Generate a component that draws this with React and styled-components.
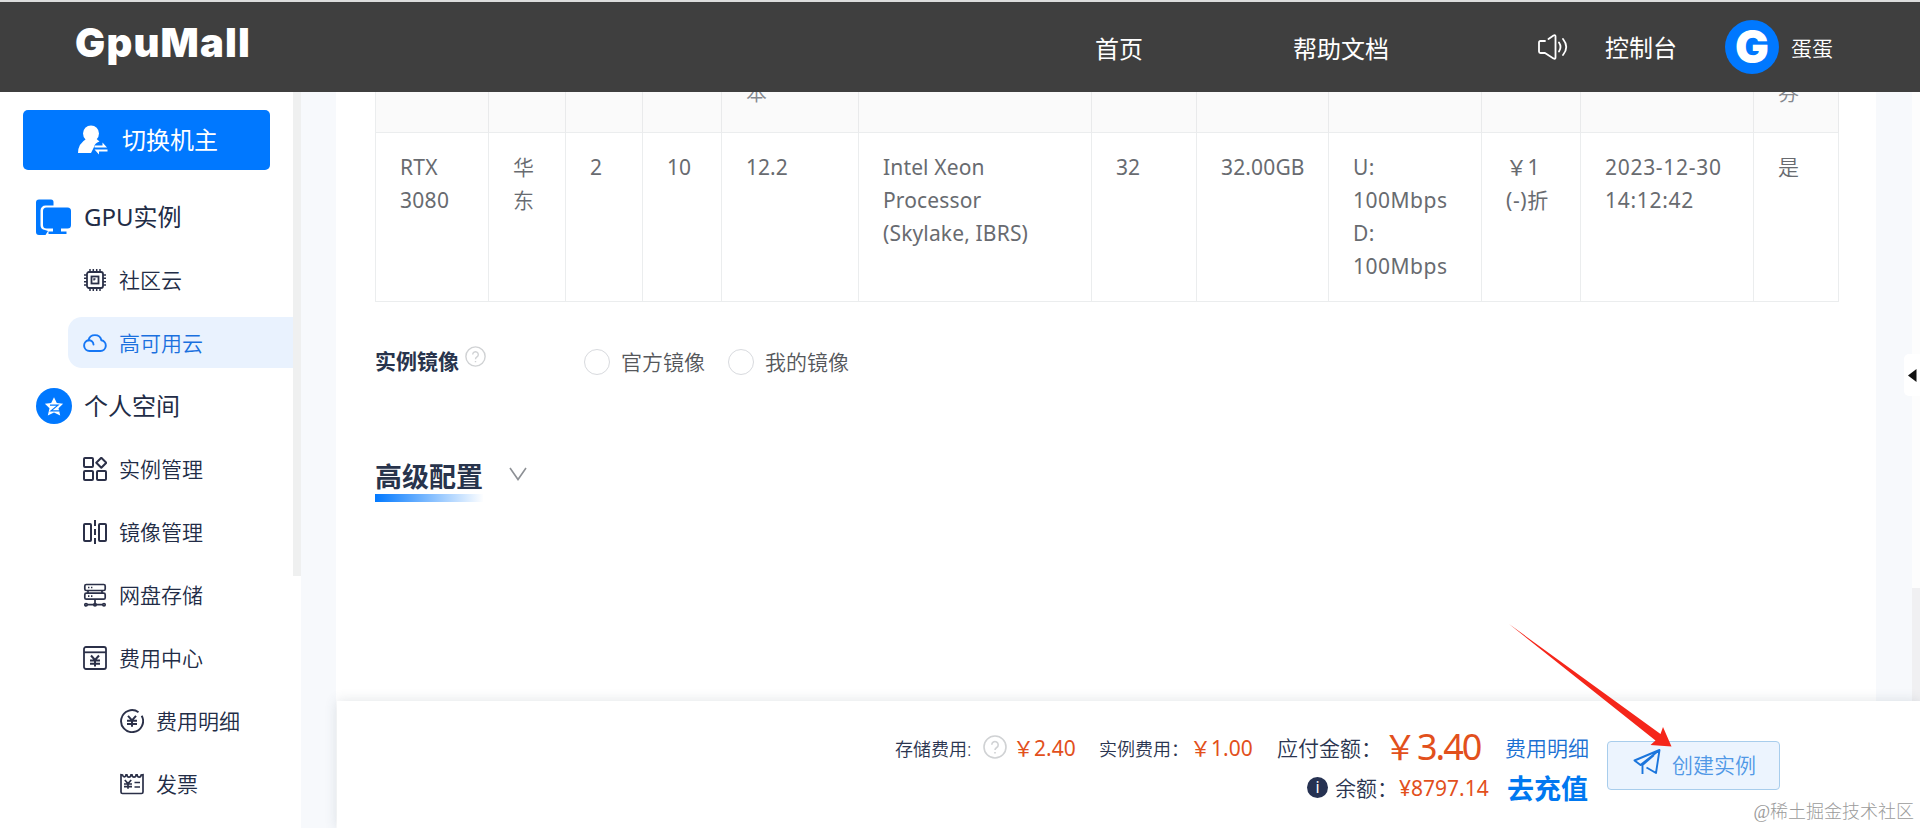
import React from 'react';
import styled, { createGlobalStyle } from 'styled-components';

const GlobalStyle = createGlobalStyle`
  * {
    box-sizing: border-box;
  }

  body {
    margin: 0;
    overflow: hidden;
    background: #dcdddd;
    font-family: "Noto Sans", "Noto Sans CJK SC", sans-serif;
    font-size: 21px;
    color: #2b3550;
  }
`;

const MENU = [
  { icon: 'gpu', text: 'GPU实例', level: 0 },
  { icon: 'chip', text: '社区云', level: 1 },
  { icon: 'cloud', text: '高可用云', level: 1, active: true },
  { icon: 'star', text: '个人空间', level: 0 },
  { icon: 'apps', text: '实例管理', level: 1 },
  { icon: 'mirror', text: '镜像管理', level: 1 },
  { icon: 'disk', text: '网盘存储', level: 1 },
  { icon: 'wallet', text: '费用中心', level: 1 },
  { icon: 'coin', text: '费用明细', level: 2 },
  { icon: 'invoice', text: '发票', level: 2 },
];

const HEAD = ['', '', '', '', '本', '', '', '', '', '', '', '券'];

const ROW = [
  { lines: ['RTX', '3080'], spacing: 0.3 },
  { lines: ['华', '东'], thin: true },
  { lines: ['2'] },
  { lines: ['10'] },
  { lines: ['12.2'] },
  { lines: ['Intel Xeon', 'Processor', '(Skylake, IBRS)'], spacing: 0.15 },
  { lines: ['32'] },
  { lines: ['32.00GB'], spacing: 0.15 },
  { lines: ['U:', '100Mbps', 'D:', '100Mbps'], spacing: 0.5 },
  { lines: ['￥1', '(-)折'], spacing: 0.6 },
  { lines: ['2023-12-30', '14:12:42'], spacing: 0.7 },
  { lines: ['是'], thin: true },
];

const Yuan = ({ x, y, s = 1, w = 2 }) => (
  <path
    d={`M${x - 4 * s} ${y - 5 * s}l${4 * s} ${4.5 * s}l${4 * s} ${-4.5 * s}M${x} ${y - 0.5 * s}v${6.5 * s}M${x - 5 * s} ${y}h${10 * s}M${x - 5 * s} ${y + 3.2 * s}h${10 * s}`}
    strokeWidth={w}
  />
);

const ICONS = {
  gpu: (
    <svg width="36" height="36" viewBox="0 0 36 36">
      <path d="M3 0.5h12a2.5 2.5 0 0 1 2.5 2.5v3.500H9.500a5 5 0 0 0-5 5v14.500a5 5 0 0 0 4.500 5l3 1-2.500 4H3a3 3 0 0 1-3-3V3.500a3 3 0 0 1 3-3z" fill="#0078ff" />
      <rect x="7" y="8.500" width="28" height="21" rx="3.500" fill="#0078ff" />
      <path d="M17 29h8v3.500h5.500v2.500h-18v-2.500H17z" fill="#0078ff" />
    </svg>
  ),
  star: (
    <svg width="36" height="36" viewBox="0 0 36 36">
      <circle cx="18" cy="18" r="18" fill="#0078ff" />
      <path d="M18 9.200l2.800 5.700 6.300.9-4.600 4.400 1.700 7.300-6.200-3-6.200 3 1.700-7.300-4.600-4.400 6.300-.9z" fill="#fff" />
      <path d="M14 17.200h8l-7 5.600h8" fill="none" stroke="#0078ff" strokeWidth="1.200" />
    </svg>
  ),
  chip: (
    <svg width="24" height="24" viewBox="0 0 24 24" fill="none" stroke="#2b3048" strokeWidth="1.800">
      <rect x="4" y="4" width="16" height="16" rx="2" />
      <rect x="8.500" y="8.500" width="7" height="7" />
      <path d="M11 12.500v-1.500h1.500" strokeWidth="1.400" />
      <path d="M7 4V1M10.300 4V1M13.700 4V1M17 4V1M7 23v-3M10.300 23v-3M13.700 23v-3M17 23v-3M4 7H1M4 10.300H1M4 13.700H1M4 17H1M23 7h-3M23 10.300h-3M23 13.700h-3M23 17h-3" strokeWidth="1.500" />
    </svg>
  ),
  cloud: (
    <svg width="24" height="24" viewBox="0 0 24 24" fill="none" stroke="#1677f5" strokeWidth="1.900" strokeLinecap="round">
      <path d="M6.500 20a5.400 5.400 0 0 1-1-10.700A6.600 6.600 0 0 1 18.400 9.300a5.400 5.400 0 0 1-.9 10.700z" />
      <path d="M5.500 9.300c2.500-.2 4.800 1.500 5 4.200" />
    </svg>
  ),
  apps: (
    <svg width="24" height="24" viewBox="0 0 24 24" fill="none" stroke="#2b3048" strokeWidth="2" strokeLinejoin="round">
      <rect x="1" y="1" width="9" height="9" rx="1" />
      <rect x="1" y="14" width="9" height="9" rx="1" />
      <rect x="14" y="14" width="9" height="9" rx="1" />
      <path d="M18.300 0.800l5 5-5 5-5-5z" />
    </svg>
  ),
  mirror: (
    <svg width="24" height="24" viewBox="0 0 24 24" fill="none" stroke="#2b3048" strokeWidth="2">
      <rect x="1" y="4" width="7" height="17" rx="1" />
      <rect x="16" y="4" width="7" height="17" rx="1" />
      <path d="M12 0v6M12 9v6M12 18v6" />
    </svg>
  ),
  disk: (
    <svg width="24" height="24" viewBox="0 0 24 24" fill="none" stroke="#2b3048" strokeWidth="1.700">
      <rect x="1.800" y="1.500" width="20.400" height="6" rx="1.500" />
      <rect x="1.800" y="10.200" width="20.400" height="6" rx="1.500" />
      <path d="M5 4.500h1.400M8 4.500h1.400M5 13.200h1.400M8 13.200h1.400M5 7.500v2.700M19 7.500v2.700M12 16.200V21M4 21.700h16" />
      <circle cx="3" cy="21.700" r="1.200" />
      <circle cx="12" cy="21.700" r="1.200" />
      <circle cx="21" cy="21.700" r="1.200" />
    </svg>
  ),
  wallet: (
    <svg width="24" height="24" viewBox="0 0 24 24" fill="none" stroke="#2b3048" strokeWidth="1.800">
      <rect x="1" y="1" width="22" height="22" rx="2" />
      <path d="M1 6.300h22" />
      <Yuan x={12} y={14.500} />
    </svg>
  ),
  coin: (
    <svg width="24" height="24" viewBox="0 0 24 24" fill="none" stroke="#2b3048" strokeWidth="1.900">
      <path d="M18.500 3.200A11 11 0 1 0 21.700 6.800" />
      <Yuan x={12} y={11.800} />
    </svg>
  ),
  invoice: (
    <svg width="24" height="24" viewBox="0 0 24 24" fill="none" stroke="#2b3048" strokeWidth="1.700">
      <path d="M1 2.700V20a1.500 1.500 0 0 0 1.500 1.500h19A1.500 1.500 0 0 0 23 20V2.700l-1.800.2c-.3 3-3.700 3-4.100 0h-1c-.4 3-3.700 3-4.100 0h-1c-.4 3-3.700 3-4.100 0H6c-.4 2.500-2.800 2.800-3.500 0z" />
      <Yuan x={8} y={12} s={0.8} w={1.7} />
      <path d="M14.500 10.500H20M14.500 15H20" />
    </svg>
  ),
};

const Help = ({ size }) => (
  <svg width={size} height={size} viewBox="0 0 24 24" fill="none" stroke="#d0d2d4" strokeWidth="1.600">
    <circle cx="12" cy="12" r="11" />
    <path d="M8.800 9.800a3.200 3.200 0 1 1 4.900 2.700c-1.300.8-1.700 1.300-1.700 2.600M12 17v1.600" />
  </svg>
);

const App = () => {
  return (
    <Page>
      <GlobalStyle />
      <Header>
        <Logo>GpuMall</Logo>
        <NavLink $width={198}>首页</NavLink>
        <NavLink $width={245}>帮助文档</NavLink>
        <svg width="30" height="26" viewBox="0 0 30 26" fill="none" stroke="#fff" strokeWidth="1.800" strokeLinecap="round" strokeLinejoin="round">
          <path d="M7 7H2.500Q1 7 1 8.500v9Q1 19 2.500 19H7l8.500 5.500q2 .8 2-1V2.500q0-2-2-1L10.500 5" />
          <path d="M21 8.500q3 4.500 0 9M25 5q6.500 8 0 16" />
        </svg>
        <Console>控制台</Console>
        <Avatar>G</Avatar>
        <UserName>蛋蛋</UserName>
      </Header>
      <Body>
        <Sidebar>
          <SwitchButton>
            <svg width="30" height="30" viewBox="0 0 30 30" fill="#fff">
              <circle cx="13" cy="8.500" r="8" />
              <path d="M9 13.500h9l3.500 3q-5 1.500-5.500 5.500l-3 6H0q0-9.500 9-14.500z" />
              <path d="M16.500 20.500h8v-3l4.500 5H16.500zM29.500 24.500h-13l4.500 5v-3h8.500z" />
            </svg>
            切换机主
          </SwitchButton>
          <Menu>
            {MENU.map((item) => (
              <MenuItem key={item.text} $level={item.level} $active={item.active}>
                {ICONS[item.icon]}
                <span>{item.text}</span>
              </MenuItem>
            ))}
          </Menu>
        </Sidebar>
        <SideScroll>
          <SideThumb />
        </SideScroll>
        <Content>
          <Panel>
            <Table>
              {HEAD.map((text, i) => (
                <HeadCell key={i}>{text}</HeadCell>
              ))}
              {ROW.map((cell, i) => (
                <Cell key={i} $spacing={cell.spacing} $thin={cell.thin}>
                  {cell.lines.map((line, j) => (
                    <div key={j}>{line}</div>
                  ))}
                </Cell>
              ))}
            </Table>
            <ImageRow>
              <Label>实例镜像</Label>
              <HelpWrap>
                <Help size={21} />
              </HelpWrap>
              <Radio>官方镜像</Radio>
              <Radio>我的镜像</Radio>
            </ImageRow>
            <Advanced>
              <h3>高级配置</h3>
              <svg width="18" height="14" viewBox="0 0 18 14" fill="none" stroke="#8d9095" strokeWidth="1.600">
                <path d="M1 1l8 11.500L17 1" />
              </svg>
            </Advanced>
          </Panel>
          <FloatTab>
            <svg width="9" height="13" viewBox="0 0 9 13">
              <path d="M0 6.500L8.500 0v13z" fill="#111" />
            </svg>
          </FloatTab>
          <PageScroll>
            <PageThumb />
          </PageScroll>
        </Content>
      </Body>
      <Footer>
        <Costs>
          <CostRow>
            <Small $width={88}>存储费用:</Small>
            <Help size={24} />
            <Price $left={6} $width={86}>￥2.40</Price>
            <Small $width={91}>实例费用：</Small>
            <Price $width={87}>￥1.00</Price>
            <Text $width={107}>应付金额：</Text>
            <BigPrice>￥<span>3.40</span></BigPrice>
            <Link>费用明细</Link>
          </CostRow>
          <BalanceRow>
            <Info>i</Info>
            <Text $width={64}>余额：</Text>
            <Balance>¥8797.14</Balance>
            <Recharge>去充值</Recharge>
          </BalanceRow>
        </Costs>
        <CreateButton>
          <svg width="28" height="26" viewBox="0 0 28 26" fill="none" stroke="#1b75dc" strokeWidth="1.900" strokeLinejoin="round">
            <path d="M26.500 1L1.500 11.500l6 4.500L26.500 1l-3.500 23-9.500-5.500M9.500 25v-9L21 6" />
          </svg>
          <span>创建实例</span>
        </CreateButton>
      </Footer>
      <Arrow width="170" height="130" viewBox="0 0 170 130">
        <path d="M0 0L151.500 110l2.500-7 8.500 19.500-21-1.500 5-4.500z" fill="#f5261a" />
      </Arrow>
      <Watermark>@稀土掘金技术社区</Watermark>
    </Page>
  );
};

const Page = styled.div`
  position: relative;
  width: 1920px;
  height: 828px;
  padding-top: 2px;
  overflow: hidden;
`;

const Header = styled.header`
  display: flex;
  align-items: center;
  height: 90px;
  padding-left: 75px;
  background: #3f3f3f;
  color: #fff;
  white-space: nowrap;
`;

const Logo = styled.div`
  width: 1020px;
  padding-bottom: 8px;
  font-family: Inter, sans-serif;
  font-size: 40px;
  font-weight: 900;
  letter-spacing: 1.2px;
  line-height: 50px;
`;

const NavLink = styled.div`
  width: ${(props) => props.$width}px;
  padding-top: 3px;
  font-size: 24px;
  line-height: 34px;
`;

const Console = styled.div`
  width: 120px;
  margin-left: 37px;
  padding-top: 1px;
  font-size: 24px;
  line-height: 34px;
`;

const Avatar = styled.div`
  display: flex;
  align-items: center;
  justify-content: center;
  width: 54px;
  height: 54px;
  border-radius: 50%;
  background: #0078ff;
  font-family: Inter, sans-serif;
  font-size: 45px;
  font-weight: 900;
  line-height: 54px;
`;

const UserName = styled.div`
  margin-left: 12px;
  padding-top: 2px;
  font-weight: 350;
  line-height: 30px;
`;

const Body = styled.div`
  display: flex;
  height: 736px;
`;

const Sidebar = styled.aside`
  width: 293px;
  padding-top: 18px;
  background: #fff;
`;

const SwitchButton = styled.div`
  display: flex;
  align-items: center;
  gap: 14px;
  width: 247px;
  height: 60px;
  margin-left: 23px;
  padding-left: 55px;
  border-radius: 5px;
  background: #0078ff;
  color: #fff;
  font-size: 24px;
  line-height: 34px;
`;

const Menu = styled.nav`
  padding-top: 15px;
`;

const indent = [36, 83, 120];

const MenuItem = styled.div`
  display: flex;
  align-items: center;
  gap: 12px;
  height: ${(props) => (props.$active ? 51 : 63)}px;
  margin: ${(props) => (props.$active ? '6px 0 6px 68px' : 0)};
  padding-left: ${(props) => indent[props.$level] - (props.$active ? 68 : 0)}px;
  border-radius: 14px 0 0 14px;
  background: ${(props) => (props.$active ? '#e9f2fe' : 'transparent')};
  color: ${(props) => (props.$active ? '#1a70de' : '#222c46')};
  font-size: ${(props) => (props.$level ? 21 : 24)}px;
  font-weight: ${(props) => (props.$level ? 350 : 400)};
  line-height: 34px;
  white-space: nowrap;
`;

const SideScroll = styled.div`
  width: 8px;
  background: #fff;
`;

const SideThumb = styled.div`
  height: 484px;
  background: #eff0f0;
`;

const Content = styled.main`
  position: relative;
  display: flex;
  flex: 1;
  padding-left: 35px;
  background: #f7f9fc;
`;

const Panel = styled.section`
  width: 1540px;
  padding-left: 39px;
  background: #fff;
`;

const Table = styled.div`
  display: grid;
  grid-template-columns: 113px 77px 77px 79px 137px 233px 105px 132px 153px 99px 173px 85px;
  grid-template-rows: 41px 169px;
  width: 1464px;
  border-left: 1px solid #ebedee;
  overflow: hidden;
  color: #686b70;
  line-height: 33px;
  white-space: nowrap;
`;

const HeadCell = styled.div`
  display: flex;
  align-items: flex-end;
  padding: 0 24px 23px;
  border-right: 1px solid #e9eaeb;
  border-bottom: 1px solid #ebedee;
  background: #fafafa;
  color: #85888e;
  font-weight: 350;
`;

const Cell = styled.div`
  padding: 18px 0 0 24px;
  border-right: 1px solid #ebedee;
  border-bottom: 1px solid #ebedee;
  font-weight: ${(props) => (props.$thin ? 350 : 400)};
  letter-spacing: ${(props) => props.$spacing || 0}px;
`;

const ImageRow = styled.div`
  display: flex;
  align-items: center;
  height: 120px;
  color: #55575b;
`;

const Label = styled.div`
  width: 90px;
  padding-bottom: 2px;
  color: #28344c;
  font-weight: 700;
  line-height: 30px;
`;

const HelpWrap = styled.div`
  width: 119px;
  padding-bottom: 6px;
`;

const Radio = styled.div`
  display: flex;
  align-items: center;
  gap: 11px;
  width: 144px;
  font-weight: 350;
  line-height: 30px;

  &::before {
    content: "";
    width: 24px;
    height: 24px;
    border: 1px solid #d8dade;
    border-radius: 50%;
  }
`;

const Advanced = styled.div`
  display: flex;
  gap: 26px;
  padding-top: 37px;

  h3 {
    margin: 0;
    padding-top: 1px;
    border-bottom: 8px solid;
    border-image: linear-gradient(90deg, #0078ff, #fff) 1;
    color: #28344c;
    font-size: 27px;
    line-height: 34px;
  }

  svg {
    margin-top: 8px;
  }
`;

const FloatTab = styled.div`
  position: absolute;
  z-index: 1;
  top: 262px;
  right: 0;
  display: flex;
  align-items: center;
  width: 16px;
  height: 42px;
  padding-left: 4px;
  border-radius: 5px 0 0 5px;
  background: #fff;
`;

const PageScroll = styled.div`
  width: 8px;
  margin-left: auto;
  padding-top: 496px;
  background: #fdfdfd;
`;

const PageThumb = styled.div`
  height: 240px;
  background: #f0f0f2;
`;

const Footer = styled.footer`
  position: absolute;
  right: 0;
  bottom: 0;
  display: flex;
  width: 1583px;
  height: 127px;
  background: #fff;
  box-shadow: 0 0 12px rgba(60, 80, 100, 0.16);
  white-space: nowrap;
`;

const Costs = styled.div`
  width: 1270px;
  padding-top: 23px;
`;

const CostRow = styled.div`
  display: flex;
  align-items: center;
  height: 46px;
  padding-left: 558px;
`;

const Small = styled.span`
  width: ${(props) => props.$width}px;
  padding-top: 2px;
  font-size: 18px;
  font-weight: 350;
`;

const Text = styled.span`
  width: ${(props) => props.$width}px;
  font-weight: 350;
`;

const Price = styled.span`
  width: ${(props) => props.$width}px;
  margin-left: ${(props) => props.$left || 0}px;
  color: #e2501c;
`;

const BigPrice = styled.span`
  display: flex;
  width: 122px;
  margin-left: -1px;
  color: #e2501c;
  font-size: 34px;
  line-height: 46px;

  span {
    font-size: 36px;
    letter-spacing: -2px;
  }
`;

const Link = styled.span`
  color: #1a70d2;
  font-weight: 350;
`;

const BalanceRow = styled.div`
  display: flex;
  align-items: center;
  height: 34px;
  padding-left: 970px;
`;

const Info = styled.span`
  width: 21px;
  height: 21px;
  margin-right: 7px;
  border-radius: 50%;
  background: #263252;
  color: #fff;
  font-size: 16px;
  line-height: 20px;
  text-align: center;
`;

const Balance = styled.span`
  width: 108px;
  padding-top: 1px;
  color: #e2501c;
`;

const Recharge = styled.span`
  padding-top: 3px;
  color: #0078f0;
  font-size: 27px;
  font-weight: 700;
  line-height: 34px;
`;

const CreateButton = styled.div`
  display: flex;
  gap: 11px;
  width: 173px;
  height: 49px;
  margin-top: 40px;
  padding: 7px 0 0 25px;
  border: 1px solid #a8cdec;
  border-radius: 4px;
  background: #ecf4fe;
  color: #5098e6;
  font-weight: 350;
  line-height: 32px;
`;

const Arrow = styled.svg`
  position: absolute;
  left: 1509px;
  top: 624px;
`;

const Watermark = styled.div`
  position: absolute;
  right: 6px;
  bottom: 3px;
  color: #9b9b9b;
  font-family: "Liberation Serif", "Noto Sans CJK SC", serif;
  font-size: 18px;
  font-weight: 300;
  line-height: 26px;
`;

export default App;
